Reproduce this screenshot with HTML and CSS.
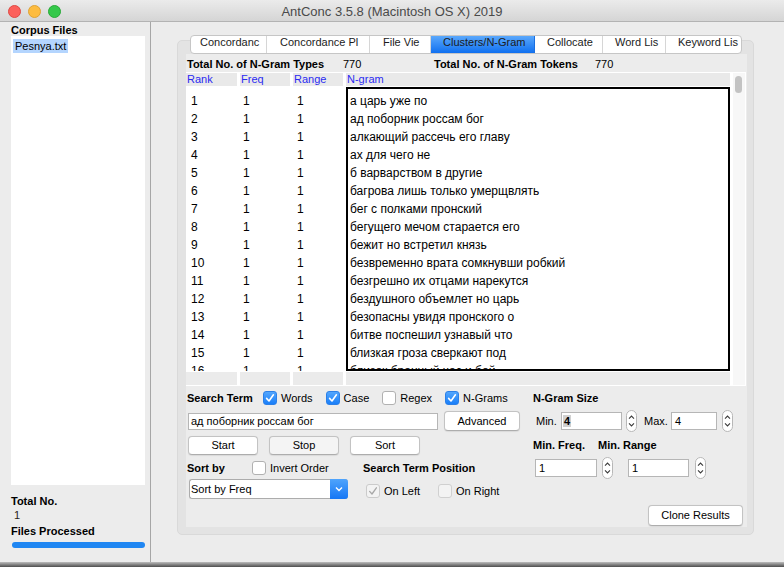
FILE: index.html
```html
<!DOCTYPE html>
<html>
<head>
<meta charset="utf-8">
<title>AntConc 3.5.8</title>
<link rel="stylesheet" href="styles.css">
</head>
<body>
<div class="window">
  <div class="titlebar">
    <div class="lights"><span class="light red"></span><span class="light yellow"></span><span class="light green"></span></div>
    <div class="title">AntConc 3.5.8 (Macintosh OS X) 2019</div>
    <div></div>
  </div>
  <div class="main">
    <aside class="sidebar">
      <div class="label">Corpus Files</div>
      <div class="filelist"><span class="file">Pesnya.txt</span></div>
      <div class="label total">Total No.</div>
      <div class="count">1</div>
      <div class="label processed">Files Processed</div>
      <div class="progress"></div>
    </aside>
    <section class="content">
      <div class="tabpane">
        <div class="tabs">
          <div class="tab t1">Concordanc</div>
          <div class="tab t2">Concordance Pl</div>
          <div class="tab t3">File Vie</div>
          <div class="tab t4 active">Clusters/N-Gram</div>
          <div class="tab t5">Collocate</div>
          <div class="tab t6">Word Lis</div>
          <div class="tab t7">Keyword Lis</div>
        </div>
        <div class="inner">
          <div class="stats">
            <span class="b s1">Total No. of N-Gram Types</span>
            <span class="s2">770</span>
            <span class="b s3">Total No. of N-Gram Tokens</span>
            <span>770</span>
          </div>
          <div class="table">
            <div class="th">Rank</div>
            <div class="th">Freq</div>
            <div class="th">Range</div>
            <div class="th">N-gram</div>
            <div class="scroll"><div class="thumb"></div></div>
            <div class="tcol rank">
              <div>1</div><div>2</div><div>3</div><div>4</div><div>5</div><div>6</div><div>7</div><div>8</div><div>9</div><div>10</div><div>11</div><div>12</div><div>13</div><div>14</div><div>15</div><div>16</div>
            </div>
            <div class="tcol freq">
              <div>1</div><div>1</div><div>1</div><div>1</div><div>1</div><div>1</div><div>1</div><div>1</div><div>1</div><div>1</div><div>1</div><div>1</div><div>1</div><div>1</div><div>1</div><div>1</div>
            </div>
            <div class="tcol range">
              <div>1</div><div>1</div><div>1</div><div>1</div><div>1</div><div>1</div><div>1</div><div>1</div><div>1</div><div>1</div><div>1</div><div>1</div><div>1</div><div>1</div><div>1</div><div>1</div>
            </div>
            <div class="tcol ngram">
              <div>а царь уже по</div>
              <div>ад поборник россам бог</div>
              <div>алкающий рассечь его главу</div>
              <div>ах для чего не</div>
              <div>б варварством в другие</div>
              <div>багрова лишь только умерщвлять</div>
              <div>бег с полками пронский</div>
              <div>бегущего мечом старается его</div>
              <div>бежит но встретил князь</div>
              <div>безвременно врата сомкнувши робкий</div>
              <div>безгрешно их отцами нарекутся</div>
              <div>бездушного объемлет но царь</div>
              <div>безопасны увидя пронского о</div>
              <div>битве поспешил узнавый что</div>
              <div>близкая гроза сверкают под</div>
              <div>близок бранный час и бой</div>
            </div>
            <div class="tf"></div>
            <div class="tf"></div>
            <div class="tf"></div>
            <div class="tf"></div>
          </div>
          <div class="controls">
            <div class="left">
              <div class="row1">
                <span class="b lbl-search">Search Term</span>
                <label class="opt"><span class="cb on"><svg viewBox="0 0 14 14"><path d="M3.6 7.4 L6 10 L10.4 3.8"/></svg></span>Words</label>
                <label class="opt"><span class="cb on"><svg viewBox="0 0 14 14"><path d="M3.6 7.4 L6 10 L10.4 3.8"/></svg></span>Case</label>
                <label class="opt"><span class="cb"></span>Regex</label>
                <label class="opt"><span class="cb on"><svg viewBox="0 0 14 14"><path d="M3.6 7.4 L6 10 L10.4 3.8"/></svg></span>N-Grams</label>
              </div>
              <div class="row2">
                <div class="input search">ад поборник россам бог</div>
                <div class="btn advanced">Advanced</div>
              </div>
              <div class="row3">
                <div class="btn">Start</div>
                <div class="btn stop">Stop</div>
                <div class="btn">Sort</div>
              </div>
              <div class="row45">
                <div class="sortcol">
                  <div class="row4">
                    <span class="b lbl-sort">Sort by</span>
                    <label class="opt"><span class="cb"></span>Invert Order</label>
                  </div>
                  <div class="select">
                    <span class="sel-text">Sort by Freq</span>
                    <span class="sel-arrow"><svg viewBox="0 0 18 20"><path d="M6 8.5 L9 11.5 L12 8.5"/></svg></span>
                  </div>
                </div>
                <div class="poscol">
                  <div class="b pos-label">Search Term Position</div>
                  <div class="pos-row">
                    <label class="opt onleft"><span class="cb dis"><svg viewBox="0 0 14 14"><path d="M3.6 7.4 L6 10 L10.4 3.8"/></svg></span>On Left</label>
                    <label class="opt"><span class="cb disoff"></span>On Right</label>
                  </div>
                </div>
              </div>
            </div>
            <div class="right">
              <div class="b r1">N-Gram Size</div>
              <div class="r2">
                <span class="lbl-min">Min.</span>
                <div class="input nmin"><span class="hl">4</span></div>
                <svg class="stepper s-min" viewBox="0 0 11 22"><rect x="0.5" y="0.5" width="10" height="21" rx="5"/><path d="M3 8.6 L5.5 6.1 L8 8.6 M3 13.4 L5.5 15.9 L8 13.4"/></svg>
                <span class="lbl-max">Max.</span>
                <div class="input nmax">4</div>
                <svg class="stepper s-max" viewBox="0 0 11 22"><rect x="0.5" y="0.5" width="10" height="21" rx="5"/><path d="M3 8.6 L5.5 6.1 L8 8.6 M3 13.4 L5.5 15.9 L8 13.4"/></svg>
              </div>
              <div class="b r3"><span class="lbl-freq">Min. Freq.</span><span>Min. Range</span></div>
              <div class="r4">
                <div class="input mfreq">1</div>
                <svg class="stepper s-freq" viewBox="0 0 11 22"><rect x="0.5" y="0.5" width="10" height="21" rx="5"/><path d="M3 8.6 L5.5 6.1 L8 8.6 M3 13.4 L5.5 15.9 L8 13.4"/></svg>
                <div class="input mrange">1</div>
                <svg class="stepper s-range" viewBox="0 0 11 22"><rect x="0.5" y="0.5" width="10" height="21" rx="5"/><path d="M3 8.6 L5.5 6.1 L8 8.6 M3 13.4 L5.5 15.9 L8 13.4"/></svg>
              </div>
              <div class="btn clone">Clone Results</div>
            </div>
          </div>
        </div>
      </div>
    </section>
  </div>
  <div class="bottom-edge"></div>
</div>
</body>
</html>
```

FILE: styles.css
```css
* { box-sizing: border-box; }
html, body { margin: 0; padding: 0; }
body {
  width: 784px;
  height: 567px;
  overflow: hidden;
  background: #ececec;
  font-family: "Liberation Sans", Arial, sans-serif;
  font-size: 11px;
  color: #000;
}
.b { font-weight: bold; }
.window { display: flex; flex-direction: column; height: 567px; }

/* title bar */
.titlebar {
  height: 22px;
  flex: none;
  display: grid;
  grid-template-columns: 1fr auto 1fr;
  align-items: center;
  background: linear-gradient(#ebebeb, #d5d5d5);
  border-bottom: 1px solid #b3b3b3;
}
.lights { display: flex; gap: 7px; padding-left: 8px; padding-top: 1px; }
.light { width: 13px; height: 13px; border-radius: 50%; }
.red { background: #fc605b; border: 1px solid #df4943; }
.yellow { background: #fdbc40; border: 1px solid #dfa234; }
.green { background: #34c84a; border: 1px solid #28a937; }
.title { font-size: 13px; color: #4a4a4a; padding-top: 1px; }

.main { flex: 1; display: flex; min-height: 0; }

/* sidebar */
.sidebar {
  width: 151px;
  flex: none;
  border-right: 1px solid #a6a6a6;
  padding: 2px 0 0 11px;
  display: flex;
  flex-direction: column;
}
.label { font-weight: bold; line-height: 12px; }
.filelist {
  width: 134px;
  height: 449px;
  background: #fff;
  padding: 3px 0 0 2px;
}
.file { display: inline-block; background: #b4d5fe; padding: 0 2px; line-height: 14px; }
.total { margin-top: 9px; line-height: 14px; }
.count { line-height: 14px; padding-left: 3px; color: #2a2218; }
.processed { margin-top: 2px; line-height: 14px; }
.progress {
  margin-top: 4px;
  margin-left: 1px;
  width: 133px;
  height: 6px;
  border-radius: 3px;
  background: #1f86f2;
}

/* content */
.content { flex: 1; padding: 18px 0 0 26px; }
.tabpane {
  width: 577px;
  height: 495px;
  background: #e3e3e3;
  border: 1px solid #d9d9d9;
  border-radius: 5px;
  padding: 0 6px 7px 8px;
  display: flex;
  flex-direction: column;
}
.tabs {
  margin: -6px 5px 0 4px;
  height: 19px;
  flex: none;
  display: flex;
  background: #fff;
  border: 1px solid #c6c6c6;
  border-radius: 4px;
  overflow: hidden;
}
.tab {
  border-right: 1px solid #d6d6d6;
  line-height: 12px;
  padding-top: 0;
  white-space: nowrap;
  color: #1b1b1b;
}
.t1 { width: 76px; padding-left: 9px; }
.t2 { width: 103px; padding-left: 13px; }
.t3 { width: 61px; padding-left: 13px; }
.t4 { width: 104px; padding-left: 12px; }
.t5 { width: 68px; padding-left: 12px; }
.t6 { width: 63px; padding-left: 12px; }
.t7 { width: 75px; padding-left: 12px; border-right: none; }
.tab.active { background: linear-gradient(#5aa8fc, #1070f0); border-right-color: #1a6fe0; }

.inner { flex: 1; background: #ececec; display: flex; flex-direction: column; }
.stats { margin-top: 3px; height: 14px; line-height: 14px; display: flex; padding-left: 1px; }
.s1 { width: 156px; }
.s2 { width: 91px; }
.s3 { width: 161px; }

/* table */
.table {
  margin-top: 1px;
  width: 560px;
  background: #fff;
  padding: 1px 1px 1px 0;
  display: grid;
  grid-template-columns: 51px 50px 50px 384px 12px;
  grid-template-rows: 13px 284px 13px;
  column-gap: 3px;
  row-gap: 1px;
}
.th { background: #e9e9e9; color: #2b2bf2; line-height: 13px; padding-left: 1px; }
.scroll { grid-column: 5; grid-row: 1 / 4; background: #f7f7f7; padding-top: 3px; }
.thumb { margin-left: 2px; width: 7px; height: 17px; border-radius: 4px; background: #c3c3c3; }
.tcol { overflow: hidden; font-size: 12px; line-height: 18px; padding-top: 5px; }
.rank { padding-left: 5px; }
.freq { padding-left: 3px; }
.range { padding-left: 4px; }
.tcol.ngram { border: 2px solid #000; padding: 3px 0 0 2px; white-space: nowrap; }
.tf { background: #ebebeb; }

/* controls */
.controls {
  flex: 1;
  display: grid;
  grid-template-columns: 334px 214px;
  column-gap: 13px;
}
.left, .right { display: flex; flex-direction: column; }
.row1 { margin-top: 5px; height: 14px; display: flex; align-items: center; }
.lbl-search { width: 77px; padding-left: 1px; flex: none; }
.opt { display: flex; align-items: center; gap: 4px; margin-right: 13px; flex: none; white-space: nowrap; }
.cb {
  width: 14px;
  height: 14px;
  border-radius: 3px;
  background: #fff;
  border: 1px solid #b1b1b1;
  flex: none;
  display: block;
}
.cb svg { display: block; width: 14px; height: 14px; margin: -1px; }
.cb svg path { fill: none; stroke: #fff; stroke-width: 1.6; stroke-linecap: round; stroke-linejoin: round; }
.cb.on { background: linear-gradient(#53a6fd, #1a7ff9); border-color: #2c80e8; }
.cb.dis { background: #f3f3f3; border-color: #cbcbcb; }
.cb.dis svg path { stroke: #a8a8a8; stroke-width: 1.3; }
.cb.disoff { background: #f3f3f3; border-color: #d0d0d0; }

.input {
  background: #fff;
  border: 1px solid #b6b6b6;
  height: 18px;
  line-height: 16px;
  padding-left: 3px;
  white-space: nowrap;
}
.row2 { margin-top: 6px; height: 20px; display: flex; align-items: center; padding-left: 2px; }
.search { width: 250px; height: 17px; line-height: 15px; padding-left: 2px; }
.btn {
  background: #fff;
  border: 1px solid #c3c3c3;
  border-bottom-color: #adadad;
  border-radius: 4px;
  text-align: center;
  line-height: 17px;
  height: 19px;
  box-shadow: 0 0.5px 1px rgba(0, 0, 0, 0.08);
}
.advanced { margin-left: 6px; width: 76px; height: 20px; line-height: 18px; }
.row3 { margin-top: 5px; display: flex; gap: 11px; padding-left: 2px; }
.row3 .btn { width: 70px; }
.btn.stop { background: #f4f4f4; }

.row45 { display: flex; }
.sortcol { width: 177px; }
.row4 { margin-top: 6px; height: 14px; display: flex; align-items: center; }
.lbl-sort { width: 66px; padding-left: 1px; }
.select {
  margin-top: 4px;
  margin-left: 3px;
  width: 159px;
  height: 20px;
  display: flex;
  background: #fff;
  border: 1px solid #acacac;
  border-right: none;
  border-radius: 3px;
}
.sel-text { flex: 1; line-height: 18px; padding-left: 1px; }
.sel-arrow {
  width: 18px;
  margin: -1px 0;
  background: linear-gradient(#4fa4fc, #1677f5);
  border-radius: 0 3px 3px 0;
}
.sel-arrow svg { display: block; width: 18px; height: 20px; }
.sel-arrow path { fill: none; stroke: #fff; stroke-width: 1.4; }
.poscol { display: flex; flex-direction: column; }
.pos-label { margin-top: 6px; height: 14px; line-height: 14px; }
.pos-row { margin-top: 9px; display: flex; align-items: center; padding-left: 3px; }
.onleft { width: 72px; margin-right: 0; }

.r1 { margin-top: 5px; height: 14px; line-height: 14px; }
.r2 { margin-top: 5px; height: 22px; display: flex; align-items: center; padding-left: 3px; }
.lbl-min { width: 25px; }
.nmin { width: 61px; padding-left: 1px; font-weight: bold; }
.hl { background: #d0d0d0; padding: 0 1px; }
.stepper { display: block; width: 11px; height: 22px; flex: none; }
.stepper rect { fill: #fff; stroke: #b7b7b7; }
.stepper path { fill: none; stroke: #3a3a3a; stroke-width: 1.1; }
.s-min { margin-left: 4px; }
.lbl-max { margin-left: 7px; width: 27px; }
.nmax { width: 46px; }
.s-max { margin-left: 5px; }
.r3 { margin-top: 6px; height: 14px; line-height: 14px; display: flex; }
.lbl-freq { width: 65px; }
.r4 { margin-top: 5px; height: 22px; display: flex; align-items: center; padding-left: 2px; }
.mfreq { width: 62px; }
.s-freq { margin-left: 5px; }
.mrange { margin-left: 15px; width: 61px; }
.s-range { margin-left: 6px; }
.clone { margin-top: 26px; margin-left: 115px; width: 95px; height: 21px; line-height: 19px; }

.bottom-edge { height: 5px; flex: none; background: linear-gradient(#bdbdbd, #4d4d4d); }
```
